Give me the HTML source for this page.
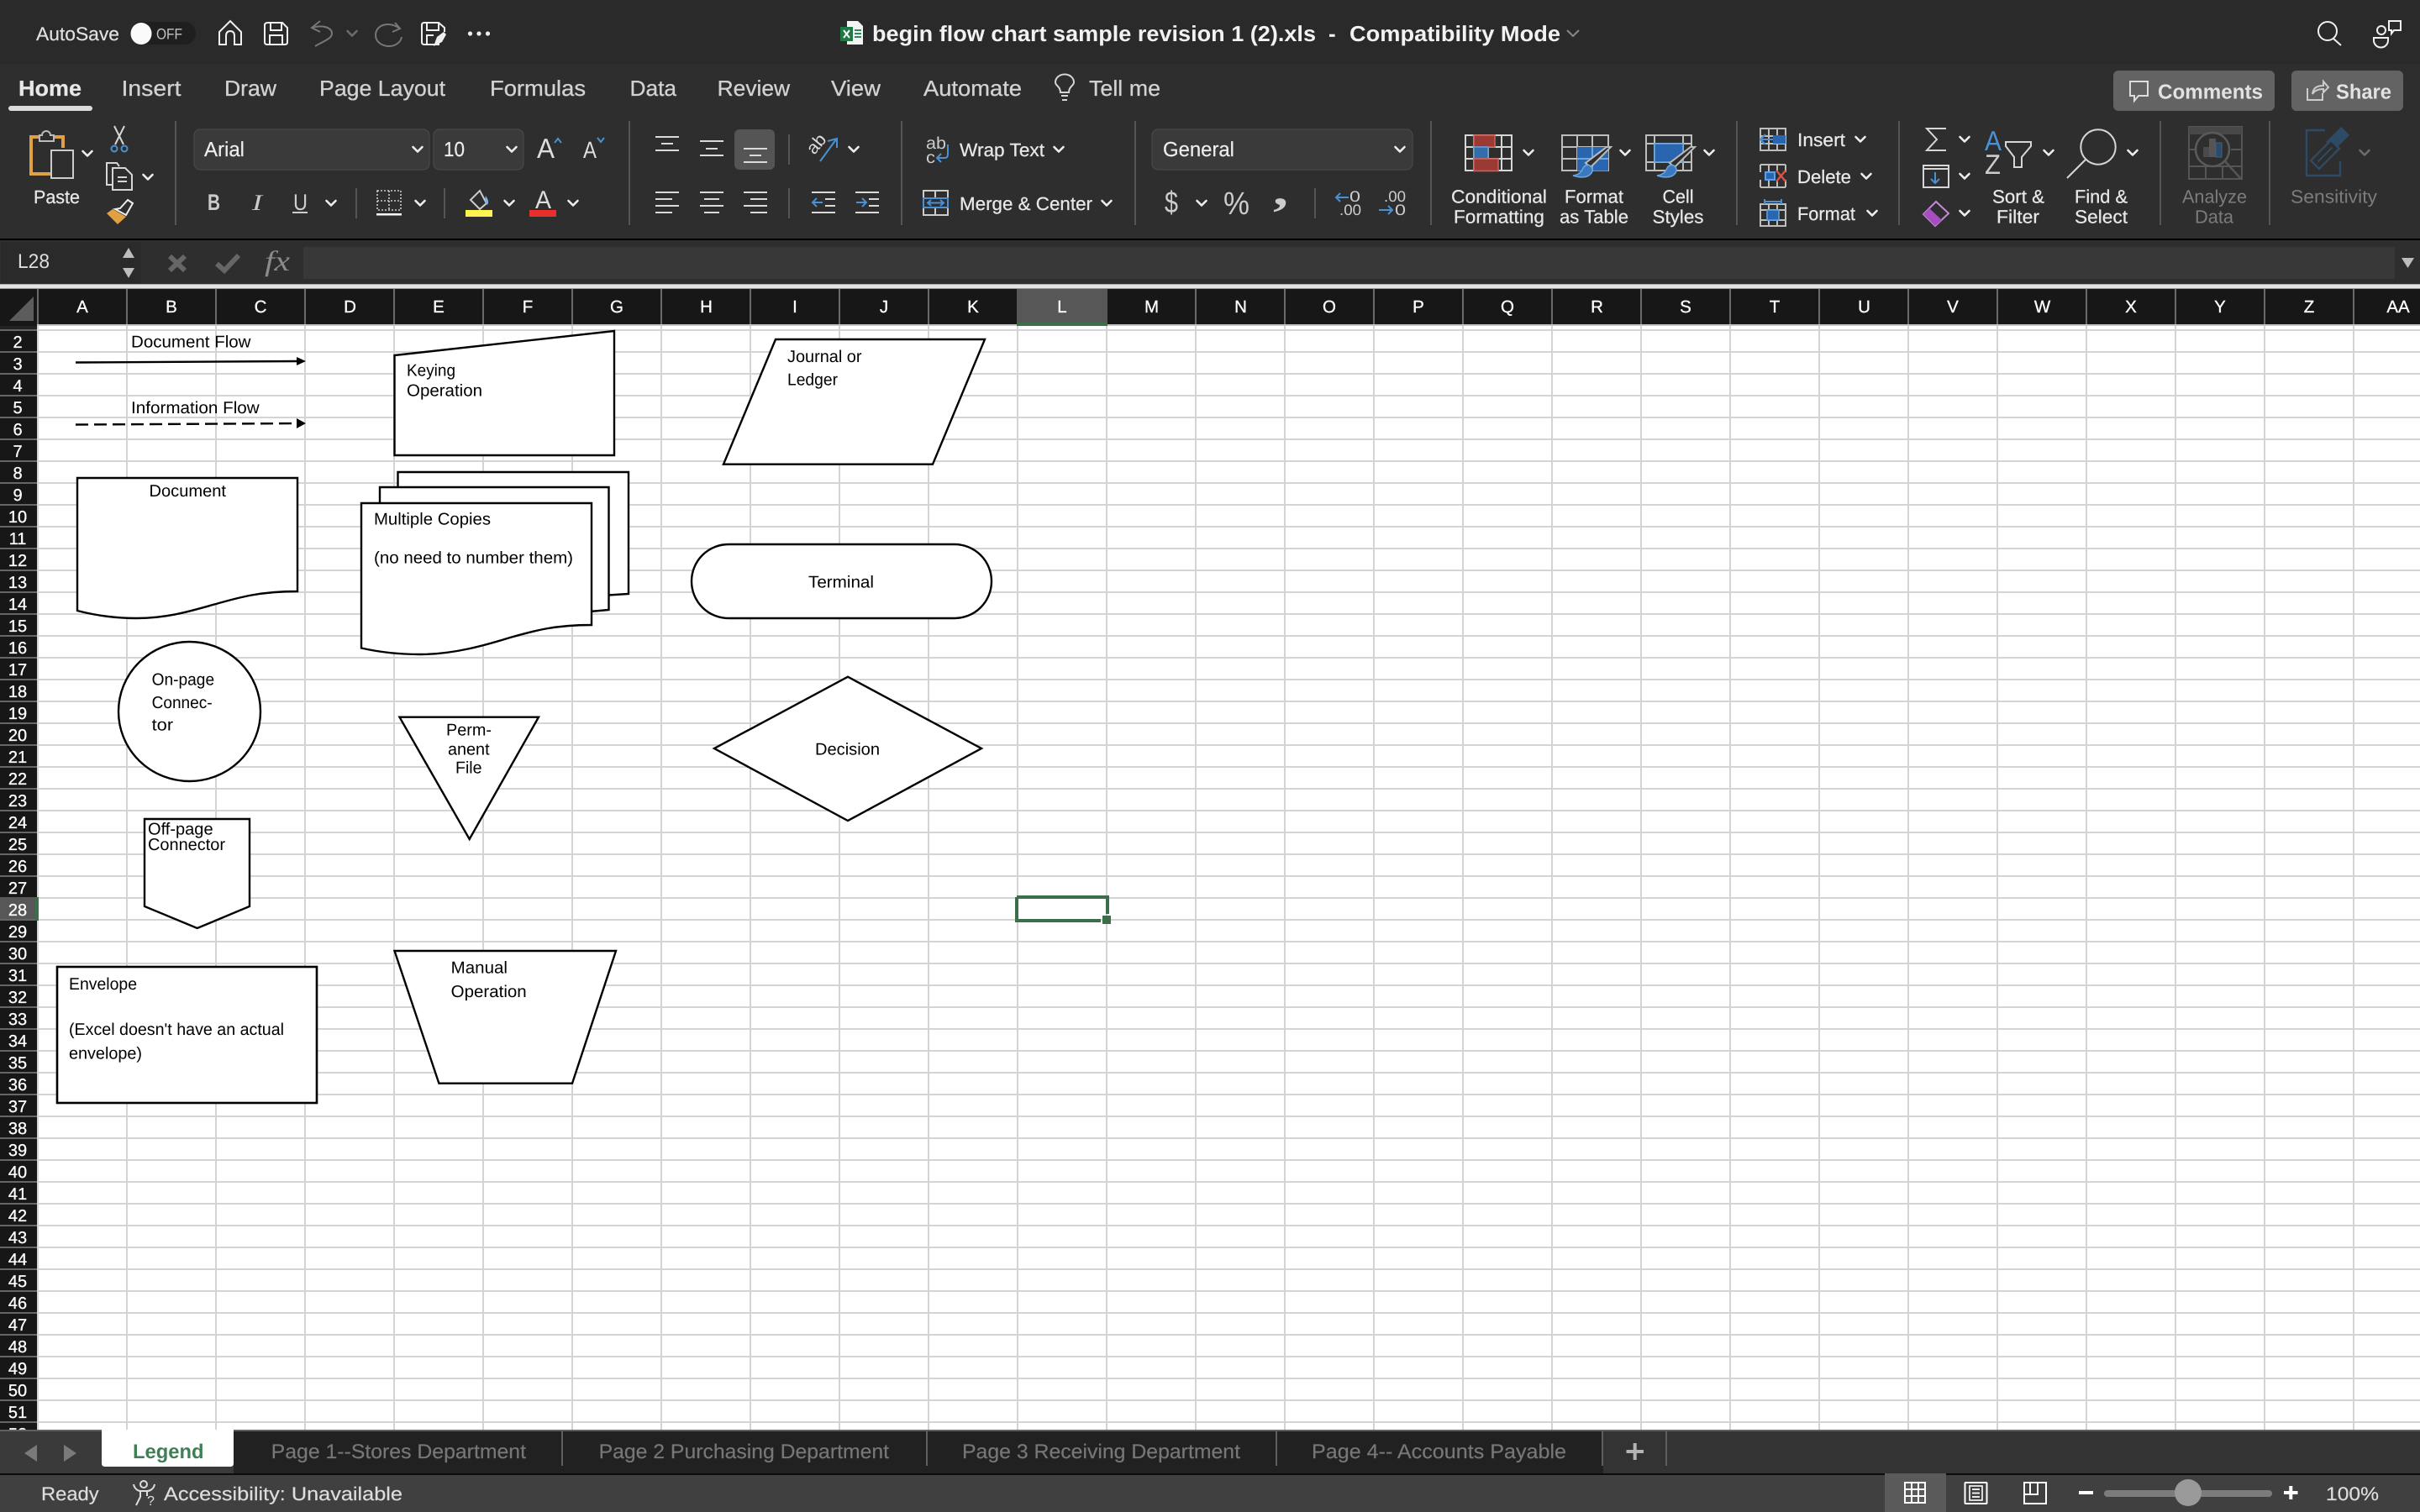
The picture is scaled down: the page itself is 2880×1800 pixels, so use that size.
<!DOCTYPE html>
<html lang="en"><head><meta charset="utf-8"><title>begin flow chart sample revision 1 (2).xls</title>
<style>
html,body{margin:0;padding:0;background:#2a2a2a;width:2880px;height:1800px;overflow:hidden}
svg{display:block}
text{font-family:"Liberation Sans",sans-serif;text-rendering:geometricPrecision;white-space:pre}
.tab{font-size:26px;fill:#d2d2d2;stroke:#d2d2d2;stroke-width:.3;transform:translateY(1px)}
.rb{font-size:22px;fill:#e8e8e8;stroke:#e8e8e8;stroke-width:.25}
.dim{font-size:22px;fill:#7c7c7c}
.box{font-size:24.5px;fill:#eee;stroke:#eee;stroke-width:.2}
.s{font-size:20px;fill:#000;transform:translateY(.7px)}
.h{font-size:20.5px;fill:#fff;stroke:#fff;stroke-width:.3;text-anchor:middle}
.r{font-size:20px;fill:#fff;stroke:#fff;stroke-width:.3;text-anchor:middle}
.st{font-size:22.5px;fill:#ddd;stroke:#ddd;stroke-width:.2;transform:translateY(1px)}
.sh{font-size:24px;fill:#777;stroke:#777;stroke-width:.2;transform:translateY(1px)}
.i{fill:none;stroke:#d6d6d6;stroke-width:2}
.w{fill:none;stroke:#f0f0f0;stroke-width:2}
.bl{fill:none;stroke:#4a90d2;stroke-width:2}
.shape{fill:#fff;stroke:#000;stroke-width:2.4}
</style></head><body>
<svg xmlns="http://www.w3.org/2000/svg" width="2880" height="1800" viewBox="0 0 2880 1800">
<defs>
<path id="c" d="M-5.5 -3 L0 2.5 L5.5 -3" fill="none" stroke="#eee" stroke-width="2.6" stroke-linecap="round" stroke-linejoin="round"/>
<path id="cd" d="M-5.5 -3 L0 2.5 L5.5 -3" fill="none" stroke="#6c6c6c" stroke-width="2.6" stroke-linecap="round" stroke-linejoin="round"/>
<pattern id="g" x="44" y="392" width="106" height="26" patternUnits="userSpaceOnUse"><rect width="106" height="26" fill="#fff"/><rect width="2" height="26" fill="#d4d4d4"/><rect width="106" height="2" fill="#d4d4d4"/></pattern>
<pattern id="ch" x="44" y="344" width="106" height="42" patternUnits="userSpaceOnUse"><rect width="106" height="42" fill="#171717"/><rect width="2" height="42" fill="#6a6a6a"/></pattern>
<pattern id="rh" x="0" y="392" width="44" height="26" patternUnits="userSpaceOnUse"><rect width="44" height="26" fill="#171717"/><rect width="44" height="2" fill="#666"/></pattern>
</defs>

<!-- backgrounds -->
<rect width="2880" height="76" fill="#2a2a2a"/>
<rect y="76" width="2880" height="208" fill="#2e2e2e"/>
<rect y="284" width="2880" height="2" fill="#000"/>
<rect y="286" width="2880" height="52" fill="#2e2e2e"/>
<rect y="338" width="2880" height="6" fill="#e4e4e4"/><rect y="338" width="2880" height="1" fill="#aaa"/><rect y="343" width="2880" height="1" fill="#999"/>

<!-- title bar -->
<text x="43" y="48" font-size="22.5" fill="#e0e0e0" stroke="#e0e0e0" stroke-width=".2" textLength="99" lengthAdjust="spacingAndGlyphs">AutoSave</text>
<rect x="155" y="26" width="78" height="27" rx="13.5" fill="#1f1f1f"/>
<ellipse cx="168" cy="40" rx="12.5" ry="13" fill="#fafafa"/>
<text x="186" y="46.5" font-size="18" fill="#c4c4c4" textLength="31" lengthAdjust="spacingAndGlyphs">OFF</text>
<path class="w" d="M261 53 V38 L274 25 L287 38 V53 H279 V43 Q279 37 274 37 Q269 37 269 43 V53 Z"/>
<g class="w"><path d="M319 27 H336 L342 33 V50 Q342 53 339 53 H318 Q315 53 315 50 V30 Q315 27 319 27 Z"/><path d="M322 27 V36 H335 V27 M321 53 V42 H336 V53"/></g>
<path d="M381 25 L371 33 L381 38 M371 33 C385 29 395 33 395 40 C395 46 385 49 375 55" fill="none" stroke="#777" stroke-width="2"/>
<use href="#cd" x="419" y="40"/>
<path d="M470 27 L476 34 L467 38 M476 34 C462 24 447 30 447 42 C447 50 455 55 463 55 C471 55 477 50 478 44" fill="none" stroke="#777" stroke-width="2"/>
<g class="w"><path d="M522 47 V53 H505 Q502 53 502 50 V30 Q502 27 505 27 H522 L529 33 V38"/><path d="M508 27 V36 H522 V27 M508 53 V42 H516"/></g>
<path d="M516 55 L520 44 L528 38 L531 41 L526 50 Z" fill="#f0f0f0"/>
<circle cx="559.5" cy="40" r="2.6" fill="#eee"/><circle cx="570" cy="40" r="2.6" fill="#eee"/><circle cx="580.5" cy="40" r="2.6" fill="#eee"/>
<path d="M1008 25 H1021 L1027 31 V53 H1008 Z" fill="#f4f4f4"/>
<rect x="1000" y="32" width="15" height="17" fill="#1e7a45"/><path d="M1004 36 L1011 45 M1011 36 L1004 45" stroke="#fff" stroke-width="2"/>
<path d="M1017 36 H1025 M1017 40 H1025 M1017 44 H1025" stroke="#2a8c55" stroke-width="2"/>
<text x="1038" y="49" font-size="26" font-weight="700" fill="#f2f2f2" textLength="528" lengthAdjust="spacingAndGlyphs">begin flow chart sample revision 1 (2).xls</text>
<text x="1581" y="49" font-size="26" font-weight="700" fill="#f2f2f2">-</text>
<text x="1606" y="49" font-size="26" font-weight="700" fill="#f2f2f2" textLength="251" lengthAdjust="spacingAndGlyphs">Compatibility Mode</text>
<path d="M1865 36 L1872 43 L1879 36" fill="none" stroke="#888" stroke-width="2"/>
<circle class="w" cx="2770" cy="37" r="11"/><path class="w" d="M2777 46 L2786 54"/>
<g class="w"><circle cx="2834" cy="36" r="5"/><path d="M2825 45 H2842 V48 A8.5 8.5 0 0 1 2825 48 Z"/><path d="M2843 25 H2857 V36 H2849 L2846 40 V36 H2843 Z"/></g>

<!-- ribbon tabs -->
<text class="tab" x="22" y="113" font-weight="700" textLength="75" lengthAdjust="spacingAndGlyphs" style="fill:#e8e8e8">Home</text>
<rect x="10" y="126" width="100" height="6" rx="3" fill="#dcdcdc"/>
<text class="tab" x="144.5" y="113" textLength="71" lengthAdjust="spacingAndGlyphs">Insert</text>
<text class="tab" x="267" y="113" textLength="62" lengthAdjust="spacingAndGlyphs">Draw</text>
<text class="tab" x="380" y="113" textLength="150" lengthAdjust="spacingAndGlyphs">Page Layout</text>
<text class="tab" x="583" y="113" textLength="114" lengthAdjust="spacingAndGlyphs">Formulas</text>
<text class="tab" x="749.5" y="113" textLength="55.5" lengthAdjust="spacingAndGlyphs">Data</text>
<text class="tab" x="853.6" y="113" textLength="86.5" lengthAdjust="spacingAndGlyphs">Review</text>
<text class="tab" x="989" y="113" textLength="59" lengthAdjust="spacingAndGlyphs">View</text>
<text class="tab" x="1099" y="113" textLength="117" lengthAdjust="spacingAndGlyphs">Automate</text>
<path class="i" d="M1262 110 C1262 103 1256 102 1256 98 A11 9.5 0 0 1 1278 98 C1278 102 1272 103 1272 110 Z M1263 114 H1271 M1264 119 H1270"/>
<text class="tab" x="1296" y="113" textLength="85" lengthAdjust="spacingAndGlyphs">Tell me</text>

<rect x="2515" y="84" width="192" height="48" rx="6" fill="#636363"/>
<path d="M2535 97 H2556 V114 H2545 L2540 120 V114 H2535 Z" fill="none" stroke="#ddd" stroke-width="2"/>
<text x="2568" y="117.5" font-size="24.5" font-weight="700" fill="#e2e2e2" textLength="125" lengthAdjust="spacingAndGlyphs">Comments</text>
<rect x="2727" y="84" width="133" height="48" rx="6" fill="#636363"/>
<path d="M2746 105 V119 H2764 V111 M2752 112 C2753 104 2758 102 2765 102 V97 L2771 104 L2765 110 V106 C2760 106 2755 107 2752 112 Z" fill="none" stroke="#ccc" stroke-width="2"/>
<text x="2780" y="117.5" font-size="24.5" font-weight="700" fill="#e2e2e2" textLength="66" lengthAdjust="spacingAndGlyphs">Share</text>

<!-- group separators -->
<g fill="#555"><rect x="208" y="144" width="2" height="124"/><rect x="748" y="144" width="2" height="124"/><rect x="1072" y="144" width="2" height="124"/><rect x="1350" y="144" width="2" height="124"/><rect x="1702" y="144" width="2" height="124"/><rect x="2066" y="144" width="2" height="124"/><rect x="2259" y="144" width="2" height="124"/><rect x="2570" y="144" width="2" height="124"/><rect x="2700" y="144" width="2" height="124"/>
<rect x="423" y="224" width="2" height="36"/><rect x="528" y="224" width="2" height="36"/><rect x="938" y="160" width="2" height="36"/><rect x="938" y="224" width="2" height="36"/><rect x="1564" y="224" width="2" height="36"/></g>

<!-- clipboard -->
<path d="M47 163 H37 V207 H60" fill="none" stroke="#e2a045" stroke-width="4"/><path d="M65 163 H75 V176" fill="none" stroke="#e2a045" stroke-width="4"/>
<path d="M47 168 V161 H50 A5 5 0 0 1 60 161 H64 V168 Z" fill="#2e2e2e" stroke="#bbb" stroke-width="2"/>
<rect x="61" y="179" width="26" height="33" fill="#2e2e2e" stroke="#ccc" stroke-width="2"/>
<use href="#c" x="104" y="183"/>
<text class="rb" x="40" y="242" textLength="55" lengthAdjust="spacingAndGlyphs">Paste</text>
<path class="i" d="M136 150 L147 172 M148 150 L137 172" stroke-width="1.6"/>
<circle class="bl" cx="136" cy="177" r="3.5"/><circle class="bl" cx="148" cy="177" r="3.5"/>
<path class="i" d="M134 220 H127 V194 H139 L142 198"/><path class="i" d="M134 200 H149 L157 208 V226 H134 Z M140 211 H151 M140 216 H151"/>
<use href="#c" x="176" y="211"/>
<path d="M134 249 L150 258 L140 267 L127 254 Z" fill="#e2a045"/>
<path d="M152 238 L158 242 L150 256 L137 249 L143 248 Z" fill="#2e2e2e" stroke="#eee" stroke-width="2"/>

<!-- font group -->
<rect x="231" y="154" width="280" height="48" rx="7" fill="#3a3a3a" stroke="#4c4c4c"/>
<text class="box" x="243" y="186" textLength="48" lengthAdjust="spacingAndGlyphs">Arial</text><use href="#c" x="497" y="178"/>
<rect x="516" y="154" width="107" height="48" rx="7" fill="#3a3a3a" stroke="#4c4c4c"/>
<text class="box" x="528" y="186" textLength="25" lengthAdjust="spacingAndGlyphs">10</text><use href="#c" x="609" y="178"/>
<text x="639" y="188" font-size="33" fill="#ddd" textLength="21" lengthAdjust="spacingAndGlyphs">A</text>
<path class="bl" d="M660 170 L664 165 L668 170"/>
<text x="694" y="188" font-size="28" fill="#ddd" textLength="16" lengthAdjust="spacingAndGlyphs">A</text>
<path class="bl" d="M711 164 L715 169 L719 164"/>
<text x="247" y="250" font-size="27" font-weight="700" fill="#ccc" textLength="15" lengthAdjust="spacingAndGlyphs">B</text>
<text x="300" y="250" font-size="27" font-style="italic" fill="#ccc" textLength="12" lengthAdjust="spacingAndGlyphs" style="font-family:'Liberation Serif',serif">I</text>
<text x="349" y="250" font-size="27" fill="#ccc" textLength="17" lengthAdjust="spacingAndGlyphs">U</text><rect x="348" y="252" width="18" height="2" fill="#ccc"/>
<use href="#c" x="394" y="242"/>
<path d="M449 227 H477 V250 H449 Z M463 227 V250 M449 239 H477" fill="none" stroke="#ccc" stroke-width="1.6" stroke-dasharray="2 2"/>
<rect x="448" y="254" width="30" height="2.5" fill="#fff"/><use href="#c" x="500" y="242"/>
<path d="M560 238 L571 227 L579 242 L571 249 Z" fill="none" stroke="#ccc" stroke-width="2"/>
<path d="M578 233 Q583 240 580 244 Q576 240 578 233Z" fill="#7fb2e0"/>
<rect x="554" y="250" width="32" height="8" fill="#fff44f"/><use href="#c" x="606" y="242"/>
<text x="637" y="248" font-size="30" fill="#ddd" textLength="19" lengthAdjust="spacingAndGlyphs">A</text>
<rect x="630" y="250" width="32" height="8" fill="#e8302a"/><use href="#c" x="682" y="242"/>

<!-- alignment -->
<rect x="874" y="154" width="48" height="48" rx="6" fill="#555"/>
<path d="M780 163 H808 M787 171 H801 M780 179 H808 M833 168 H861 M840 177 H854 M833 185 H861 M885 177 H913 M892 185 H906 M885 193 H913" stroke="#dadada" stroke-width="2"/>
<path d="M780 229 H808 M780 237 H800 M780 245 H808 M780 253 H800 M833 229 H861 M838 237 H856 M833 245 H861 M838 253 H856 M885 229 H913 M893 237 H913 M885 245 H913 M893 253 H913" stroke="#dadada" stroke-width="2"/>
<text x="0" y="0" font-size="21" fill="#ddd" transform="translate(969 185) rotate(-50)" textLength="24" lengthAdjust="spacingAndGlyphs">ab</text>
<path class="bl" d="M976 192 L995 166 M985 168 L996 165 L996 176" stroke-width="1.6"/><use href="#c" x="1016" y="178"/>
<path d="M966 229 H994 M982 237 H994 M982 245 H994 M966 253 H994 M1018 229 H1046 M1034 237 H1046 M1034 245 H1046 M1018 253 H1046" stroke="#dadada" stroke-width="2"/>
<path class="bl" d="M979 241 H967 M972 236 L967 241 L972 246 M1019 241 H1031 M1026 236 L1031 241 L1026 246"/>
<text x="1102" y="177" font-size="20" fill="#ccc" textLength="24" lengthAdjust="spacingAndGlyphs">ab</text>
<text x="1102" y="194" font-size="20" fill="#ccc" textLength="11" lengthAdjust="spacingAndGlyphs">c</text>
<path class="bl" d="M1128 172 V184 Q1128 188 1124 188 H1115 M1120 183 L1115 188 L1120 193"/>
<text class="rb" x="1142" y="186" textLength="101" lengthAdjust="spacingAndGlyphs">Wrap Text</text><use href="#c" x="1260" y="178"/>
<rect x="1099" y="227" width="29" height="29" fill="none" stroke="#ccc" stroke-width="2"/><path d="M1099 236 H1128 M1099 247 H1128 M1113 227 V236 M1113 247 V256" stroke="#ccc" stroke-width="2"/>
<rect x="1099" y="236" width="29" height="11" fill="none" stroke="#4a90d2" stroke-width="2"/>
<path class="bl" d="M1104 241.5 H1123 M1108 238 L1104 241.5 L1108 245 M1119 238 L1123 241.5 L1119 245"/>
<text class="rb" x="1142" y="250" textLength="158" lengthAdjust="spacingAndGlyphs">Merge &amp; Center</text><use href="#c" x="1317" y="242"/>

<!-- number -->
<rect x="1371" y="154" width="310" height="48" rx="7" fill="#3a3a3a" stroke="#4c4c4c"/>
<text class="box" x="1384" y="186" textLength="85" lengthAdjust="spacingAndGlyphs">General</text><use href="#c" x="1666" y="178"/>
<text x="1386" y="253" font-size="36" fill="#ccc" textLength="16" lengthAdjust="spacingAndGlyphs">$</text><use href="#c" x="1430" y="242"/>
<text x="1456" y="255" font-size="38" fill="#ccc" textLength="31" lengthAdjust="spacingAndGlyphs">%</text>
<text x="1515" y="244" font-size="54" font-weight="700" fill="#ccc" textLength="18" lengthAdjust="spacingAndGlyphs" style="font-family:'Liberation Serif',serif">,</text>
<text x="1606" y="240" font-size="18" fill="#ccc" textLength="13" lengthAdjust="spacingAndGlyphs">0</text>
<text x="1594" y="256" font-size="18" fill="#ccc" textLength="26" lengthAdjust="spacingAndGlyphs">.00</text>
<path class="bl" d="M1605 235 H1590 M1595 230 L1590 235 L1595 240"/>
<text x="1647" y="240" font-size="18" fill="#ccc" textLength="26" lengthAdjust="spacingAndGlyphs">.00</text>
<text x="1660" y="256" font-size="18" fill="#ccc" textLength="13" lengthAdjust="spacingAndGlyphs">0</text>
<path class="bl" d="M1641 250 H1657 M1652 245 L1657 250 L1652 255"/>

<!-- styles -->
<path class="i" d="M1744 161 H1799 V203 H1744 Z M1754 161 V203 M1771 161 V203 M1787 161 V203 M1744 175 H1799 M1744 189 H1799" stroke="#bdbdbd"/>
<rect x="1754" y="161" width="25" height="14" fill="#9b3a35" stroke="#cf5f57" stroke-width="1.6"/>
<rect x="1754" y="175" width="17" height="14" fill="#336ea8" stroke="#5d9fd8" stroke-width="1.6"/>
<rect x="1754" y="189" width="29" height="14.5" fill="#9b3a35" stroke="#cf5f57" stroke-width="1.6"/>
<use href="#c" x="1819" y="182"/>
<path d="M1859 161 H1914 V203 H1859 Z M1877 161 V203 M1895 161 V203 M1859 175 H1914 M1859 189 H1914" fill="none" stroke="#bdbdbd" stroke-width="2"/>
<rect x="1877" y="175" width="37" height="28.5" fill="#2a66b0"/><path d="M1877 189 H1914 M1895 175 V203" stroke="#6aa6e0" stroke-width="2"/>
<path d="M1917 175 L1893 199 L1887 194 L1912 175 Z" fill="#2e2e2e" stroke="#bbb" stroke-width="2"/>
<path d="M1872 209 Q1881 208 1884 200 Q1887 195 1892 197 Q1897 201 1894 206 Q1888 214 1872 209 Z" fill="#3c78bd" stroke="#6aa6e0" stroke-width="1.5"/>
<use href="#c" x="1934" y="182"/>
<path d="M1959 161 H2013 V203 H1959 Z M1969 161 V203 M2003 161 V203 M1959 171 H2013 M1959 193 H2013" fill="none" stroke="#bdbdbd" stroke-width="2"/>
<rect x="1969" y="171" width="34" height="22" fill="#2a66b0" stroke="#6aa6e0" stroke-width="1.5"/>
<path d="M2017 175 L1993 199 L1987 194 L2012 175 Z" fill="#2e2e2e" stroke="#bbb" stroke-width="2"/>
<path d="M1972 209 Q1981 208 1984 200 Q1987 195 1992 197 Q1997 201 1994 206 Q1988 214 1972 209 Z" fill="#3c78bd" stroke="#6aa6e0" stroke-width="1.5"/>
<use href="#c" x="2034" y="182"/>
<text class="rb" x="1784" y="241.5" textLength="114" lengthAdjust="spacingAndGlyphs" text-anchor="middle">Conditional</text>
<text class="rb" x="1784" y="265.5" textLength="108" lengthAdjust="spacingAndGlyphs" text-anchor="middle">Formatting</text>
<text class="rb" x="1897" y="241.5" textLength="70" lengthAdjust="spacingAndGlyphs" text-anchor="middle">Format</text>
<text class="rb" x="1897" y="265.5" textLength="82" lengthAdjust="spacingAndGlyphs" text-anchor="middle">as Table</text>
<text class="rb" x="1997" y="241.5" textLength="37" lengthAdjust="spacingAndGlyphs" text-anchor="middle">Cell</text>
<text class="rb" x="1997" y="265.5" textLength="61" lengthAdjust="spacingAndGlyphs" text-anchor="middle">Styles</text>

<!-- cells -->
<path d="M2095 153 H2125 V179 H2095 Z M2105 153 V179 M2115 153 V179 M2095 162 H2125 M2095 171 H2125" fill="none" stroke="#bdbdbd" stroke-width="2"/>
<rect x="2110" y="161" width="15" height="10" fill="#2a66b0"/><path class="bl" d="M2110 166 H2095 M2101 160 L2095 166 L2101 172" stroke="#5da0e0"/>
<text class="rb" x="2139" y="174" textLength="57" lengthAdjust="spacingAndGlyphs">Insert</text><use href="#c" x="2214" y="166"/>
<path d="M2095 196 H2125 M2095 223 H2125 M2095 196 V205 M2095 214 V223 M2105 196 V205 M2105 214 V223 M2115 196 V205 M2115 214 V223 M2125 196 V205 M2125 214 V223" stroke="#bdbdbd" stroke-width="2"/>
<rect x="2101" y="205" width="11" height="9" fill="#2a66b0" stroke="#5da0e0" stroke-width="2"/><path d="M2114 203 L2125 216 M2125 203 L2114 216" stroke="#d9534a" stroke-width="2.4"/>
<text class="rb" x="2139" y="218" textLength="64" lengthAdjust="spacingAndGlyphs">Delete</text><use href="#c" x="2221" y="210"/>
<path d="M2095 243 H2125 V269 H2095 Z M2105 243 V269 M2115 243 V269 M2095 250 H2125 M2095 262 H2125" fill="none" stroke="#bdbdbd" stroke-width="2"/>
<rect x="2103" y="250" width="14" height="12" fill="#2a66b0" stroke="#5da0e0" stroke-width="1.6"/><path class="bl" d="M2100 240 H2120 M2100 237 V243 M2120 237 V243"/>
<text class="rb" x="2139" y="262" textLength="69" lengthAdjust="spacingAndGlyphs">Format</text><use href="#c" x="2228" y="254"/>

<!-- editing -->
<path class="i" d="M2316 153 H2293 L2305 166 L2293 179 H2316"/><use href="#c" x="2338" y="166"/>
<rect class="i" x="2289" y="197" width="30" height="26"/><path class="i" d="M2289 201 H2319"/><path class="bl" d="M2303 205 V218 M2298 213 L2303 218 L2308 213"/><use href="#c" x="2338" y="210"/>
<path d="M2304 240 L2319 254 L2303 269 L2289 255 Z" fill="none" stroke="#c58ad8" stroke-width="2"/><path d="M2296 248 L2311 262 L2303 269 L2289 255 Z" fill="#a64ec0"/><use href="#c" x="2338" y="254"/>
<text x="2362" y="179" font-size="33" fill="#4a90d2" textLength="20" lengthAdjust="spacingAndGlyphs">A</text>
<text x="2362" y="207" font-size="33" fill="#ccc" textLength="19" lengthAdjust="spacingAndGlyphs">Z</text>
<path class="i" d="M2387 169 H2417 V174 L2406 187 V199 H2397 V187 L2387 174 Z"/><use href="#c" x="2438" y="182"/>
<circle class="i" cx="2497" cy="175" r="20.7"/><path class="i" d="M2482 190 L2460 212"/><use href="#c" x="2538" y="182"/>
<text class="rb" x="2402" y="241.5" textLength="62" lengthAdjust="spacingAndGlyphs" text-anchor="middle">Sort &amp;</text>
<text class="rb" x="2401.5" y="265.5" textLength="51" lengthAdjust="spacingAndGlyphs" text-anchor="middle">Filter</text>
<text class="rb" x="2500.5" y="241.5" textLength="63" lengthAdjust="spacingAndGlyphs" text-anchor="middle">Find &amp;</text>
<text class="rb" x="2500.5" y="265.5" textLength="63" lengthAdjust="spacingAndGlyphs" text-anchor="middle">Select</text>

<!-- analyze -->
<rect x="2605" y="151" width="63" height="62" fill="none" stroke="#555" stroke-width="2"/><rect x="2605" y="151" width="63" height="9" fill="#484848"/>
<path d="M2605 198 H2667 M2625 198 V213 M2645 198 V213 M2605 178 H2613 M2655 178 H2667" stroke="#555" stroke-width="2"/>
<circle cx="2633" cy="178" r="20" fill="#2e2e2e" stroke="#5a5a5a" stroke-width="2.6"/><path d="M2648 192 L2667 213" stroke="#555" stroke-width="2.6"/>
<rect x="2622" y="175" width="7" height="12" fill="#4a4a4a"/><rect x="2629" y="165" width="8" height="22" fill="#555"/><rect x="2637" y="170" width="7" height="17" fill="#2d4a66" stroke="#3d6288"/>
<text class="dim" x="2597" y="241.5" textLength="77" lengthAdjust="spacingAndGlyphs">Analyze</text>
<text class="dim" x="2612" y="265.5" textLength="46" lengthAdjust="spacingAndGlyphs">Data</text>

<!-- sensitivity -->
<path d="M2767 155 H2745 V209 H2785 V192" fill="none" stroke="#2d4a66" stroke-width="2.4"/>
<rect x="2769" y="158" width="26" height="14" fill="#2d4a66" transform="rotate(-45 2782 165)"/>
<rect x="2750" y="177" width="34" height="14" fill="#2e2e2e" stroke="#2d4a66" stroke-width="2.4" transform="rotate(-45 2767 184)"/>
<path d="M2755 184 H2779" stroke="#2d4a66" stroke-width="2" transform="rotate(-45 2767 184)"/>
<use href="#cd" x="2814" y="182"/>
<text class="dim" x="2726" y="241.5" textLength="103" lengthAdjust="spacingAndGlyphs">Sensitivity</text>

<!-- formula bar -->
<rect x="1" y="288" width="167" height="49" fill="#2a2a2a"/>
<text x="21" y="319" font-size="24" fill="#ddd" textLength="38" lengthAdjust="spacingAndGlyphs">L28</text>
<path d="M153 295 L160 307 H146 Z M153 331 L160 319 H146 Z" fill="#bdbdbd"/>
<path d="M202 305 L220 322 M220 305 L202 322" stroke="#666" stroke-width="6"/>
<path d="M258 314 L267 322 L284 304" fill="none" stroke="#666" stroke-width="6"/>
<text x="315" y="322" font-size="34" font-style="italic" fill="#8a8a8a" textLength="30" lengthAdjust="spacingAndGlyphs" style="font-family:'Liberation Serif',serif">fx</text>
<rect x="361" y="294" width="2489" height="38" fill="#383838"/>
<path d="M2858 307 H2873 L2865.5 319 Z" fill="#bdbdbd"/>

<!-- grid -->
<rect x="44" y="388" width="2836" height="1314" fill="url(#g)"/>
<rect x="0" y="386" width="2880" height="2" fill="#c4c4c4"/>
<rect x="0" y="344" width="2880" height="42" fill="url(#ch)"/>
<path d="M40 353 V382 H11 Z" fill="#5c5c5c"/>
<rect x="1210" y="344" width="108" height="42" fill="#575757"/><rect x="1210" y="384" width="108" height="4" fill="#3a6f49"/>
<rect x="0" y="386" width="44" height="1316" fill="url(#rh)"/>
<rect x="0" y="388" width="44" height="4" fill="#222"/>
<rect x="0" y="1068" width="44" height="26" fill="#575757"/><rect x="42" y="1068" width="4" height="28" fill="#3a6f49"/>
<g transform="translate(0,-1)">
<text class="h" x="98" y="373">A</text><text class="h" x="204" y="373">B</text><text class="h" x="310" y="373">C</text><text class="h" x="416.5" y="373">D</text><text class="h" x="522" y="373">E</text><text class="h" x="628" y="373">F</text><text class="h" x="734" y="373">G</text><text class="h" x="840.5" y="373">H</text><text class="h" x="946" y="373">I</text><text class="h" x="1052" y="373">J</text><text class="h" x="1158" y="373">K</text><text class="h" x="1264" y="373">L</text><text class="h" x="1370.5" y="373">M</text><text class="h" x="1476.5" y="373">N</text><text class="h" x="1582" y="373">O</text><text class="h" x="1688" y="373">P</text><text class="h" x="1794" y="373">Q</text><text class="h" x="1900.5" y="373">R</text><text class="h" x="2006" y="373">S</text><text class="h" x="2112" y="373">T</text><text class="h" x="2218.5" y="373">U</text><text class="h" x="2324" y="373">V</text><text class="h" x="2430.5" y="373">W</text><text class="h" x="2536" y="373">X</text><text class="h" x="2642" y="373">Y</text><text class="h" x="2748" y="373">Z</text><text class="h" x="2854" y="373">AA</text>
</g>
<g>
<text class="r" x="21" y="414">2</text><text class="r" x="21" y="440">3</text><text class="r" x="21" y="466">4</text><text class="r" x="21" y="492">5</text><text class="r" x="21" y="518">6</text><text class="r" x="21" y="544">7</text><text class="r" x="21" y="570">8</text><text class="r" x="21" y="596">9</text><text class="r" x="21" y="622">10</text><text class="r" x="21" y="648">11</text><text class="r" x="21" y="674">12</text><text class="r" x="21" y="700">13</text><text class="r" x="21" y="726">14</text><text class="r" x="21" y="752">15</text><text class="r" x="21" y="778">16</text><text class="r" x="21" y="804">17</text><text class="r" x="21" y="830">18</text><text class="r" x="21" y="856">19</text><text class="r" x="21" y="882">20</text><text class="r" x="21" y="908">21</text><text class="r" x="21" y="934">22</text><text class="r" x="21" y="960">23</text><text class="r" x="21" y="986">24</text><text class="r" x="21" y="1012">25</text><text class="r" x="21" y="1038">26</text><text class="r" x="21" y="1064">27</text><text class="r" x="21" y="1090">28</text><text class="r" x="21" y="1116">29</text><text class="r" x="21" y="1142">30</text><text class="r" x="21" y="1168">31</text><text class="r" x="21" y="1194">32</text><text class="r" x="21" y="1220">33</text><text class="r" x="21" y="1246">34</text><text class="r" x="21" y="1272">35</text><text class="r" x="21" y="1298">36</text><text class="r" x="21" y="1324">37</text><text class="r" x="21" y="1350">38</text><text class="r" x="21" y="1376">39</text><text class="r" x="21" y="1402">40</text><text class="r" x="21" y="1428">41</text><text class="r" x="21" y="1454">42</text><text class="r" x="21" y="1480">43</text><text class="r" x="21" y="1506">44</text><text class="r" x="21" y="1532">45</text><text class="r" x="21" y="1558">46</text><text class="r" x="21" y="1584">47</text><text class="r" x="21" y="1610">48</text><text class="r" x="21" y="1636">49</text><text class="r" x="21" y="1662">50</text><text class="r" x="21" y="1688">51</text><text class="r" x="21" y="1714">52</text>
</g>

<!-- selection -->
<path d="M1210 1068 H1318 V1088 M1310 1096 H1210 V1068" fill="none" stroke="#3a6f49" stroke-width="4"/>
<rect x="1312" y="1090" width="10" height="10" fill="#3a6f49"/>

<!-- shapes -->
<text class="s" x="156" y="413" textLength="142.5" lengthAdjust="spacingAndGlyphs">Document Flow</text>
<path d="M90 431.5 L355 430" stroke="#000" stroke-width="2.4"/><path d="M353 425 L364 430 L353 435 Z" fill="#000"/>
<text class="s" x="156" y="491.5" textLength="152.7" lengthAdjust="spacingAndGlyphs">Information Flow</text>
<path d="M90 505.5 L355 504" stroke="#000" stroke-width="2.4" stroke-dasharray="15 7"/><path d="M353 498 L364 504 L353 510 Z" fill="#000"/>

<path class="shape" d="M92 569 H354 V704 C310 704 285 711 257 719 C228 727 200 736 163 736 C140 736 115 733 92 727 Z"/>
<text class="s" x="177.5" y="590.5" textLength="91.5" lengthAdjust="spacingAndGlyphs">Document</text>

<path class="shape" d="M469.5 423 L731 394 V542 H469.5 Z"/>
<text class="s" x="484" y="447" textLength="58" lengthAdjust="spacingAndGlyphs">Keying</text>
<text class="s" x="484" y="471" textLength="90" lengthAdjust="spacingAndGlyphs">Operation</text>

<path class="shape" d="M473.5 562 H748 V707 L700 710 H473.5 Z"/>
<path class="shape" d="M452 580 H724.5 V726 L680 730 H452 Z"/>
<path class="shape" d="M430 599 H704 V744 C660 744 635 751 607 759 C578 768 540 779 500 779 C475 779 450 776 430 771.5 Z"/>
<text class="s" x="445" y="624" textLength="139" lengthAdjust="spacingAndGlyphs">Multiple Copies</text>
<text class="s" x="445" y="670" textLength="237" lengthAdjust="spacingAndGlyphs">(no need to number them)</text>

<ellipse class="shape" cx="225.5" cy="847" rx="84.5" ry="83" stroke-width="2"/>
<text class="s" x="180.6" y="815" textLength="74.5" lengthAdjust="spacingAndGlyphs">On-page</text>
<text class="s" x="180.6" y="842.5" textLength="72" lengthAdjust="spacingAndGlyphs">Connec-</text>
<text class="s" x="180.6" y="869" textLength="25.5" lengthAdjust="spacingAndGlyphs">tor</text>

<path class="shape" d="M475.5 853.7 H641 L558.7 999 Z"/>
<text class="s" x="531" y="875" textLength="54" lengthAdjust="spacingAndGlyphs">Perm-</text>
<text class="s" x="533" y="898" textLength="49.6" lengthAdjust="spacingAndGlyphs">anent</text>
<text class="s" x="542" y="920" textLength="31.5" lengthAdjust="spacingAndGlyphs">File</text>

<path class="shape" d="M172 975 H297 V1079 L234.7 1105 L172 1079 Z"/>
<text class="s" x="176" y="993" textLength="77.6" lengthAdjust="spacingAndGlyphs">Off-page</text>
<text class="s" x="176" y="1011.5" textLength="92" lengthAdjust="spacingAndGlyphs">Connector</text>

<rect x="68" y="1151" width="309" height="162" fill="#fff" stroke="#000" stroke-width="2.6"/>
<text class="s" x="82" y="1177.5" textLength="81" lengthAdjust="spacingAndGlyphs">Envelope</text>
<text class="s" x="82" y="1231.5" textLength="256" lengthAdjust="spacingAndGlyphs">(Excel doesn't have an actual</text>
<text class="s" x="82" y="1260" textLength="87" lengthAdjust="spacingAndGlyphs">envelope)</text>

<path class="shape" d="M469.5 1132 H733 L681 1289.7 H522.4 Z"/>
<text class="s" x="536.7" y="1158" textLength="67.3" lengthAdjust="spacingAndGlyphs">Manual</text>
<text class="s" x="536.7" y="1186.5" textLength="90" lengthAdjust="spacingAndGlyphs">Operation</text>

<path class="shape" d="M923 404 H1172 L1110 552.7 H861 Z"/>
<text class="s" x="937" y="430.5" textLength="88.5" lengthAdjust="spacingAndGlyphs">Journal or</text>
<text class="s" x="937" y="458" textLength="60" lengthAdjust="spacingAndGlyphs">Ledger</text>

<rect class="shape" x="823" y="648" width="357" height="88" rx="44" ry="44"/>
<text class="s" x="962" y="699" textLength="78" lengthAdjust="spacingAndGlyphs">Terminal</text>

<path class="shape" d="M1009 805.7 L1168 891 L1009 977 L850 891 Z"/>
<text class="s" x="970" y="898" textLength="77" lengthAdjust="spacingAndGlyphs">Decision</text>

<!-- sheet tabs -->
<rect x="0" y="1702" width="2880" height="52" fill="#333"/>
<rect x="0" y="1704" width="278" height="50" fill="#3a3a3a"/>
<rect x="278" y="1704" width="1630" height="50" fill="#212121"/>
<rect x="0" y="1702" width="2880" height="2" fill="#606060"/>
<path d="M121 1702 H278 V1742 Q278 1746 274 1746 H125 Q121 1746 121 1742 Z" fill="#fff"/>
<path d="M44 1720 L29 1730 L44 1740 Z M76 1720 L91 1730 L76 1740 Z" fill="#7a7a7a"/>
<text x="158" y="1736" font-size="24" font-weight="700" fill="#3f7f55" textLength="84.5" lengthAdjust="spacingAndGlyphs">Legend</text>
<text class="sh" x="322.7" y="1735" textLength="303.3" lengthAdjust="spacingAndGlyphs">Page 1--Stores Department</text>
<text class="sh" x="712.6" y="1735" textLength="345.4" lengthAdjust="spacingAndGlyphs">Page 2 Purchasing Department</text>
<text class="sh" x="1145" y="1735" textLength="331" lengthAdjust="spacingAndGlyphs">Page 3 Receiving Department</text>
<text class="sh" x="1561" y="1735" textLength="303" lengthAdjust="spacingAndGlyphs">Page 4-- Accounts Payable</text>
<g fill="#5e5e5e"><rect x="668" y="1704" width="2" height="41"/><rect x="1102" y="1704" width="2" height="41"/><rect x="1518" y="1704" width="2" height="41"/><rect x="1906" y="1704" width="2" height="41"/><rect x="1982" y="1704" width="2" height="41"/></g>
<path d="M1935.5 1726 H1956 V1730 H1935.5 Z M1943.7 1718 H1947.7 V1738 H1943.7 Z" fill="#b4b4b4"/>

<!-- status bar -->
<rect x="0" y="1754" width="2880" height="2" fill="#0c0c0c"/>
<rect x="0" y="1756" width="2880" height="44" fill="#404040"/>
<text class="st" x="49" y="1785" textLength="68.6" lengthAdjust="spacingAndGlyphs">Ready</text>
<circle cx="171" cy="1767" r="4" fill="none" stroke="#ddd" stroke-width="2"/>
<path d="M159 1767 C160 1773 165 1775 167 1775 H175 C178 1775 183 1773 184 1767 M167 1775 V1782 L162 1792 M175 1775 V1781" fill="none" stroke="#ddd" stroke-width="2"/>
<text x="175" y="1792" font-size="16" fill="#ddd">?</text>
<text class="st" x="195" y="1785" textLength="284" lengthAdjust="spacingAndGlyphs">Accessibility: Unavailable</text>
<rect x="2243" y="1754" width="73" height="46" fill="#5a5a5a"/>
<path d="M2267 1765 H2291 V1789 H2267 Z M2275 1765 V1789 M2283 1765 V1789 M2267 1773 H2291 M2267 1781 H2291" fill="none" stroke="#fff" stroke-width="2"/>
<rect x="2338.5" y="1765" width="26" height="25" rx="1" fill="none" stroke="#fff" stroke-width="2"/><rect x="2344" y="1769" width="15" height="17" fill="none" stroke="#fff" stroke-width="1.6"/><path d="M2347 1773 H2356 M2347 1777.5 H2356 M2347 1782 H2356" stroke="#fff" stroke-width="1.8"/>
<path d="M2409 1765 H2435 V1790 H2409 Z M2416 1765 V1779 H2409 M2425 1765 V1779 H2416" fill="none" stroke="#fff" stroke-width="2"/>
<rect x="2474" y="1775" width="17" height="4" fill="#fff"/>
<rect x="2504" y="1774" width="200" height="8" rx="4" fill="#7c7c7c"/>
<circle cx="2604" cy="1777" r="16" fill="#9a9a9a"/>
<path d="M2718 1775 H2734.5 V1779 H2718 Z M2724.3 1769 H2728.3 V1785 H2724.3 Z" fill="#fff"/>
<text class="st" x="2768" y="1785" textLength="63" lengthAdjust="spacingAndGlyphs">100%</text>
</svg>
</body></html>
